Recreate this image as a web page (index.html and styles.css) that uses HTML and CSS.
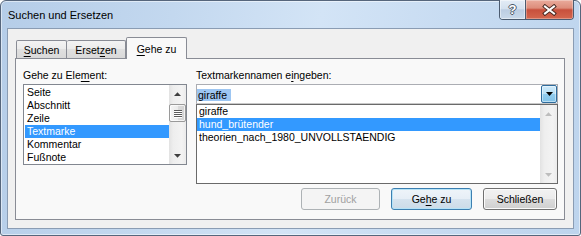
FILE: index.html
```html
<!DOCTYPE html>
<html lang="de">
<head>
<meta charset="utf-8">
<title>Suchen und Ersetzen</title>
<link rel="stylesheet" href="styles.css">
</head>
<body>
<div class="window">
  <div class="titlebar">
    <div class="title">Suchen und Ersetzen</div>
    <div class="caption-buttons">
      <div class="cap-btn help"><span class="help-glyph">?</span></div>
      <div class="cap-btn close">
        <svg class="x-icon" width="15" height="12" viewBox="0 0 15 12">
          <path class="x-outline" d="M3 2.5 L12 9.5 M12 2.5 L3 9.5"/>
          <path class="x-fill" d="M3 2.5 L12 9.5 M12 2.5 L3 9.5"/>
        </svg>
      </div>
    </div>
  </div>
  <div class="client">
    <div class="tabs">
      <div class="tab tab-suchen"><u>S</u>uchen</div>
      <div class="tab tab-ersetzen">Erset<u>z</u>en</div>
      <div class="tab tab-gehe active"><u>G</u>ehe zu</div>
    </div>
    <div class="panel">
      <div class="columns">
        <div class="col">
          <div class="label">Gehe zu Ele<u>m</u>ent:</div>
          <div class="listbox lb-left">
            <div class="items">
              <div class="item">Seite</div>
              <div class="item">Abschnitt</div>
              <div class="item">Zeile</div>
              <div class="item sel">Textmarke</div>
              <div class="item">Kommentar</div>
              <div class="item">Fußnote</div>
            </div>
            <div class="vscroll">
              <div class="sb-btn"><svg width="7" height="4" viewBox="0 0 7 4"><polygon class="arrow" points="0,4 7,4 3.5,0.3"/></svg></div>
              <div class="sb-track">
                <div class="thumb"><span class="grip"></span><span class="grip"></span><span class="grip"></span><span class="grip"></span></div>
              </div>
              <div class="sb-btn"><svg width="7" height="4" viewBox="0 0 7 4"><polygon class="arrow" points="0,0 7,0 3.5,3.7"/></svg></div>
            </div>
          </div>
        </div>
        <div class="col">
          <div class="label">Textmarkennamen e<u>i</u>ngeben:</div>
          <div class="combo">
            <div class="edit"><span class="edit-sel">giraffe</span></div>
            <div class="drop-btn"><svg width="7" height="4" viewBox="0 0 7 4"><polygon class="drop-arrow" points="0,0 7,0 3.5,4"/></svg></div>
          </div>
          <div class="listbox lb-right">
            <div class="items">
              <div class="item">giraffe</div>
              <div class="item sel">hund_brütender</div>
              <div class="item">theorien_nach_1980_UNVOLLSTAENDIG</div>
            </div>
            <div class="vscroll disabled">
              <div class="sb-btn"><svg width="7" height="4" viewBox="0 0 7 4"><polygon class="arrow" points="0,4 7,4 3.5,0.3"/></svg></div>
              <div class="sb-track"></div>
              <div class="sb-btn"><svg width="7" height="4" viewBox="0 0 7 4"><polygon class="arrow" points="0,0 7,0 3.5,3.7"/></svg></div>
            </div>
          </div>
          <div class="buttons">
            <div class="btn btn-disabled btn-zurueck">Zurück</div>
            <div class="btn btn-default btn-gehe">Ge<u>h</u>e zu</div>
            <div class="btn btn-schliessen">Schließen</div>
          </div>
        </div>
      </div>
    </div>
  </div>
</div>
</body>
</html>
```

FILE: styles.css
```css
* { box-sizing: border-box; }
html, body { margin: 0; padding: 0; }
body {
  width: 581px;
  height: 236px;
  overflow: hidden;
  background: #ffffff;
  font-family: "Liberation Sans", Arial, sans-serif;
  font-size: 10.5px;
  color: #000;
}
u { text-decoration: underline; text-underline-offset: 1.5px; text-decoration-thickness: 1px; }

.window {
  width: 581px;
  height: 236px;
  border: 1px solid #56667c;
  border-radius: 6px 6px 3px 3px;
  padding: 0 6px 6px 6px;
  background: linear-gradient(100deg, #b5cde8 0%, #c3d8ef 28%, #d3e4f6 52%, #c8dcf2 72%, #bdd4ed 100%);
  box-shadow: inset 0 0 0 1px rgba(255, 255, 255, 0.5);
  display: flex;
  flex-direction: column;
}

.titlebar {
  height: 27px;
  display: flex;
  justify-content: space-between;
  align-items: flex-start;
}
.title {
  margin-top: 8px;
  padding-left: 1px;
  font-size: 11px;
  line-height: 13px;
}
.caption-buttons {
  display: flex;
  margin-top: -1px;
  height: 20px;
  border: 1px solid #4b5b70;
  border-top: none;
  border-radius: 0 0 4px 4px;
  overflow: hidden;
}
.cap-btn {
  height: 19px;
  display: flex;
  align-items: center;
  justify-content: center;
}
.help {
  width: 26px;
  border-right: 1px solid #4b5b70;
  background: linear-gradient(#e3ecf6, #d4e1ef 45%, #bccde2 52%, #c9d9ea 100%);
  box-shadow: inset 0 0 0 1px rgba(255, 255, 255, 0.45);
}
.help-glyph {
  font-family: "Liberation Sans", Arial, sans-serif;
  font-weight: bold;
  font-size: 13px;
  line-height: 13px;
  color: #ffffff;
  text-shadow: 1px 0 0 #4a5868, -1px 0 0 #4a5868, 0 1px 0 #4a5868, 0 -1px 0 #4a5868;
}
.close {
  width: 47px;
  background: linear-gradient(#eaab9c, #dd8d7b 42%, #c8503c 52%, #d4674e 100%);
  box-shadow: inset 0 0 0 1px rgba(255, 255, 255, 0.3);
}
.x-outline { stroke: #4a2a22; stroke-width: 4; stroke-linecap: square; fill: none; }
.x-fill { stroke: #ffffff; stroke-width: 2; stroke-linecap: square; fill: none; }

.client {
  height: 201px;
  border: 1px solid #8a9cb3;
  background: #f0f0f0;
  padding: 8px 8px 8px 7px;
  display: flex;
  flex-direction: column;
}

.tabs {
  height: 21px;
  display: flex;
  align-items: flex-end;
  padding-left: 1px;
  position: relative;
  z-index: 1;
}
.tab {
  height: 18px;
  border: 1px solid #898c95;
  border-bottom: none;
  border-radius: 2px 2px 0 0;
  background: linear-gradient(#f3f3f3, #ebebeb 50%, #e0e0e0 50%, #d9d9d9);
  text-align: center;
  padding-top: 3px;
  line-height: 13px;
  white-space: nowrap;
}
.tab-suchen { width: 51px; }
.tab-ersetzen { width: 59px; border-left: none; width: 59px; }
.tab-gehe { width: 61px; }
.tab.active {
  height: 22px;
  margin-bottom: -1px;
  padding-top: 5px;
  background: #f9f9f9;
}

.panel {
  height: 162px;
  border: 1px solid #898c95;
  background: #f9f9f9;
  padding: 10px 6px 0 7px;
}
.columns {
  display: grid;
  grid-template-columns: 164px 362px;
  column-gap: 9px;
  align-items: start;
}
.col { display: flex; flex-direction: column; }
.label {
  height: 13px;
  line-height: 13px;
  margin-bottom: 2px;
  white-space: nowrap;
}

.listbox {
  background: #fff;
  display: flex;
  overflow: hidden;
}
.lb-left { height: 81px; border: 1px solid #828790; }
.lb-right { height: 80px; border: 1px solid #6a6a6a; }
.items { flex: 1; overflow: hidden; }
.lb-left .items { padding: 1px 0 0 1px; }
.item {
  height: 13px;
  line-height: 13px;
  padding-left: 2px;
  white-space: nowrap;
}
.item.sel { background: #3399ff; color: #fff; }

.vscroll {
  width: 17px;
  flex: none;
  display: flex;
  flex-direction: column;
  background: linear-gradient(to right, #e2e2e2, #eeeeee 25%, #f3f3f3 75%, #ebebeb);
}
.sb-btn {
  height: 17px;
  display: flex;
  align-items: center;
  justify-content: center;
}
.sb-btn svg { display: block; }
.arrow { fill: #3f3f3f; }
.vscroll.disabled .arrow { fill: #bdbdbd; }
.sb-track { flex: 1; }
.thumb {
  height: 18px;
  margin-top: 2px;
  border: 1px solid #9a9a9a;
  border-radius: 2px;
  background: linear-gradient(to right, #f5f5f5, #ebebeb 50%, #dcdcdc 50%, #d2d2d2);
  box-shadow: inset 0 0 0 1px rgba(255, 255, 255, 0.7);
  display: flex;
  flex-direction: column;
  align-items: center;
  justify-content: center;
  gap: 1px;
}
.grip {
  display: block;
  width: 8px;
  height: 1px;
  background: #5b5b5b;
  box-shadow: 0 1px 0 #ffffff;
}

.combo {
  height: 20px;
  border: 1px solid #abadb3;
  border-bottom-color: #c8c8c8;
  background: #fff;
  display: flex;
}
.edit { flex: 1; padding-top: 4px; }
.edit-sel {
  display: inline-block;
  height: 12px;
  line-height: 12px;
  padding: 0 4px 0 1px;
  background: #9dc6f2;
}
.drop-btn {
  width: 16px;
  height: 18px;
  border: 1px solid #2f6c9c;
  border-radius: 2px;
  background: linear-gradient(#cfeafa, #b8e0f6 50%, #93cdee 50%, #80c2e8);
  box-shadow: inset 0 0 0 1px rgba(255, 255, 255, 0.45);
  display: flex;
  align-items: center;
  justify-content: center;
  padding-left: 1px;
}
.drop-btn svg { display: block; }
.drop-arrow { fill: #000; }

.buttons {
  display: flex;
  justify-content: flex-end;
  gap: 11px;
  margin-top: 4px;
  padding-right: 1px;
}
.btn {
  height: 22px;
  border: 1px solid #707070;
  border-radius: 3px;
  background: linear-gradient(#f2f2f2, #ebebeb 50%, #dddddd 50%, #cfcfcf);
  box-shadow: inset 0 0 0 1px #fbfbfb;
  display: flex;
  align-items: center;
  justify-content: center;
  line-height: 13px;
  white-space: nowrap;
}
.btn-zurueck { width: 79px; }
.btn-gehe { width: 81px; }
.btn-schliessen { width: 74px; }
.btn-disabled {
  border-color: #adb2b5;
  background: #f4f4f4;
  box-shadow: none;
  color: #a0a0a0;
}
.btn-default {
  border-color: #3c7fb1;
  background: linear-gradient(#eef4f9, #e6eef6 50%, #d6e3ee 50%, #ccdbe8);
  box-shadow: inset 0 0 0 1px #b6e3f7;
}
```
